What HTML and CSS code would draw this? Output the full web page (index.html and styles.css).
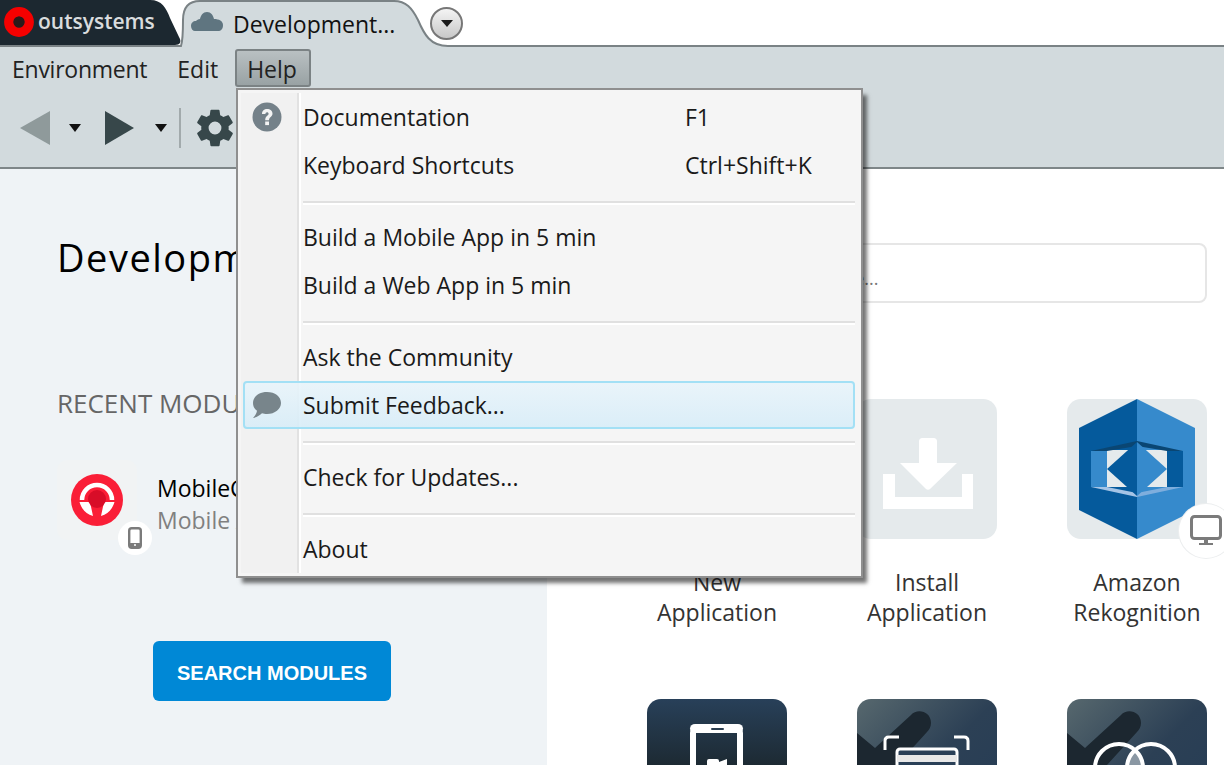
FILE: index.html
```html
<!DOCTYPE html>
<html lang="en">
<head>
    <meta charset="UTF-8">
    <meta name="viewport" content="width=device-width, initial-scale=1.0">
    <title>Service Studio</title>
    <link rel="stylesheet" href="styles.css">
</head>
<body>
    <!-- Tab strip -->
    <div class="tabstrip">
        <div class="logo-tab">
            <svg class="tab-shape" width="184" height="47" viewBox="0 0 184 47">
                <path d="M0 0H150C162 0 166 8 170 18L179 37C182 42 180 45 175 45H0Z" fill="#1c2830"/>
            </svg>
            <svg class="logo-mark" width="32" height="32" viewBox="0 0 32 32">
                <circle cx="16" cy="16" r="10.200" fill="none" stroke="#f50000" stroke-width="9.400"/>
                <circle cx="16" cy="16" r="5.500" fill="#2a1a1a"/>
            </svg>
            <span class="logo-text">outsystems</span>
        </div>
        <div class="env-tab">
            <svg class="tab-shape" width="272" height="47" viewBox="0 0 272 47">
                <path d="M1 46C3 40 3 32 3 20C3 8 8 1 20 1H214C226 1 232 8 238 20C244 34 250 46 268 46V48H0Z" fill="#d2dadd" stroke="#7a8285" stroke-width="2"/>
            </svg>
            <svg class="cloud" width="32" height="19" viewBox="0 0 32 19">
                <path d="M4 19C2 19 0 17 0 14C0 11 2 9 5 9C6 8 7 7 9 7C10 3 12 0 16 0C20 0 22 3 23 7C28 7 32 9 32 13C32 17 30 19 27 19Z" fill="#5f7580"/>
            </svg>
            <span class="tab-title">Development...</span>
        </div>
        <button class="tab-menu"><span class="tab-menu-arrow"></span></button>
    </div>

    <!-- Menu bar and toolbar -->
    <div class="chrome">
        <div class="menubar">
            <span class="menu-title menu-env">Environment</span>
            <span class="menu-title menu-edit">Edit</span>
            <span class="menu-title menu-open">Help</span>
        </div>
        <div class="toolbar">
            <span class="nav-back"></span>
            <span class="small-arrow arrow-back"></span>
            <span class="nav-forward"></span>
            <span class="small-arrow arrow-forward"></span>
            <span class="tool-sep"></span>
            <svg class="gear" width="44" height="44" viewBox="0 0 24 24">
                <path fill="#37474a" d="M19.4 13c.04-.33.06-.66.06-1s-.02-.67-.06-1l2.1-1.65c.2-.15.25-.42.13-.64l-2-3.46c-.12-.22-.38-.3-.6-.22l-2.5 1c-.52-.4-1.08-.73-1.7-.98l-.37-2.65A.49.49 0 0 0 14 2h-4c-.25 0-.46.18-.5.42l-.37 2.65c-.62.25-1.18.58-1.7.98l-2.5-1c-.22-.08-.48 0-.6.22l-2 3.46c-.13.22-.07.49.13.64L4.56 11c-.04.33-.06.67-.06 1s.02.67.06 1l-2.1 1.65c-.2.15-.25.42-.13.64l2 3.46c.12.22.38.3.6.22l2.5-1c.52.4 1.08.73 1.7.98l.37 2.65c.04.24.25.42.5.42h4c.25 0 .46-.18.5-.42l.37-2.65c.62-.25 1.18-.58 1.7-.98l2.5 1c.22.08.48 0 .6-.22l2-3.46c.12-.22.07-.49-.13-.64L19.4 13zM12 15.500a3.500 3.500 0 1 1 0-7 3.500 3.500 0 0 1 0 7z"/>
            </svg>
        </div>
    </div>

    <div class="main">
        <!-- Left panel -->
        <div class="left-panel">
            <h1 class="env-name">Development</h1>
            <h2 class="recent-title">RECENT MODULES</h2>
            <div class="module">
                <div class="module-icon">
                    <svg width="54" height="54" viewBox="0 0 54 54">
                        <circle cx="27" cy="27" r="26" fill="#fa1e37"/>
                        <path d="M12 27a15 15 0 0 1 30 0" fill="none" stroke="#fff" stroke-width="4.500"/>
                        <path d="M9.500 29L20 29L23 43C16 41 11.500 36 9.500 29ZM44.500 29L34 29L31 43C38 41 42.500 36 44.500 29Z" fill="#fff"/>
                        <circle cx="27" cy="26" r="9" fill="#d80d28"/>
                    </svg>
                    <span class="badge">
                        <svg width="14" height="22" viewBox="0 0 14 22">
                            <rect x="1.200" y="1.200" width="11.600" height="19.600" rx="2.500" fill="none" stroke="#7b7b7b" stroke-width="2.400"/>
                            <rect x="1" y="16" width="12" height="5" rx="1.500" fill="#7b7b7b"/>
                            <circle cx="7" cy="18" r="1" fill="#fff"/>
                        </svg>
                    </span>
                </div>
                <div class="module-text">
                    <div class="module-name">MobileCar</div>
                    <div class="module-type">Mobile App</div>
                </div>
            </div>
            <button class="search-btn">SEARCH MODULES</button>
        </div>

        <!-- Right panel -->
        <div class="right-panel">
            <div class="search-box">Search in Forge...</div>
            <div class="app-grid">
                <div class="app">
                    <div class="tile tile-light"></div>
                    <div class="app-name">New<br>Application</div>
                </div>
                <div class="app">
                    <div class="tile tile-light">
                        <svg width="140" height="140" viewBox="0 0 140 140">
                            <path d="M62 42C62 40 64 39 65 39H77C78 39 80 40 80 42V64H100L73 90C72 91 70 91 69 90L43 64H62Z" fill="#fff"/>
                            <path d="M26 75H38V98H105V75H116V110H26Z" fill="#fff"/>
                        </svg>
                    </div>
                    <div class="app-name">Install<br>Application</div>
                </div>
                <div class="app">
                    <div class="tile tile-light">
                        <svg width="140" height="140" viewBox="0 0 140 140">
                            <path d="M70 0L12 29V111L70 140Z" fill="#055a9c"/>
                            <path d="M70 0L128 29V111L70 140Z" fill="#368acc"/>
                            <path d="M40 51H100V88H40Z" fill="#e5eaec"/>
                            <path d="M24 52H40V88H24Z" fill="#368acc"/>
                            <path d="M100 52H116V88H100Z" fill="#055a9c"/>
                            <path d="M24 52L70 42V47L40 52Z" fill="#0a4673"/>
                            <path d="M116 52L70 42V47L100 52Z" fill="#0a4673"/>
                            <path d="M24 88L70 98V94L40 88Z" fill="#a5c4e6"/>
                            <path d="M116 88L70 98V94L100 88Z" fill="#7faedd"/>
                            <path d="M40 70L70 43V97Z" fill="#055a9c"/>
                            <path d="M100 70L70 43V97Z" fill="#368acc"/>
                        </svg>
                        <span class="badge badge-large">
                            <svg width="34" height="34" viewBox="0 0 34 34">
                                <rect x="2.500" y="2.500" width="29" height="22" rx="3" fill="none" stroke="#7b7b7b" stroke-width="3"/>
                                <path d="M15 25H19V29H24V31H10V29H15Z" fill="#7b7b7b"/>
                            </svg>
                        </span>
                    </div>
                    <div class="app-name">Amazon<br>Rekognition</div>
                </div>
                <div class="app">
                    <div class="tile tile-dark">
                        <svg width="140" height="66" viewBox="0 0 140 66">
                            <rect x="46" y="28" width="47" height="60" rx="6" fill="none" stroke="#fff" stroke-width="6"/>
                            <rect x="43" y="25" width="53" height="9" rx="5" fill="#fff"/>
                            <rect x="64" y="29" width="13" height="2" rx="1" fill="#2b3e50"/>
                            <path d="M60 62Q60 60 62 60H70Q72 60 72 62V63L80 60V66H60Z" fill="#fff"/>
                        </svg>
                    </div>
                </div>
                <div class="app">
                    <div class="tile tile-check">
                        <svg width="140" height="66" viewBox="0 0 140 66">
                            <path d="M0 34L18 49L54 16C60 9 74 12 74 24C74 28 72 31 70 33L40 66H0Z" fill="#1c2730"/>
                            <path d="M28 51V42Q28 38 32 38H42M111 51V42Q111 38 107 38H97" fill="none" stroke="#fff" stroke-width="3"/>
                            <rect x="40" y="50" width="60" height="30" rx="3" fill="#2a4057" stroke="#fff" stroke-width="3"/>
                            <rect x="40" y="56" width="60" height="7" fill="#e8e8e8"/>
                        </svg>
                    </div>
                </div>
                <div class="app">
                    <div class="tile tile-check">
                        <svg width="140" height="66" viewBox="0 0 140 66">
                            <path d="M0 34L18 49L54 16C60 9 74 12 74 24C74 28 72 31 70 33L40 66H0Z" fill="#1c2730"/>
                            <path d="M68 51A24 24 0 0 1 76 69H60A24 24 0 0 1 68 51Z" fill="#8a97a3"/>
                            <circle cx="52" cy="69" r="24" fill="none" stroke="#fff" stroke-width="4"/>
                            <circle cx="84" cy="69" r="24" fill="none" stroke="#fff" stroke-width="4"/>
                        </svg>
                    </div>
                </div>
            </div>
        </div>
    </div>

    <!-- Open Help menu -->
    <div class="help-menu">
        <div class="menu-row">
            <span class="menu-icon">
                <svg width="30" height="30" viewBox="0 0 30 30">
                    <circle cx="15" cy="15" r="14.500" fill="#748189"/>
                    <path d="M10 12C10 8.500 12.300 7 15 7C18.300 7 20.500 9 20.500 11.600C20.500 15 17 15.200 17 18.300H13.200C13.200 13.800 16.600 13.800 16.600 11.800C16.600 10.900 16 10.300 15 10.300C14 10.300 13.500 11 13.400 12Z" fill="#f4f4f4"/>
                    <rect x="13.200" y="19.500" width="3.800" height="3.600" fill="#f4f4f4"/>
                </svg>
            </span>
            <span class="menu-label">Documentation</span>
            <span class="menu-key">F1</span>
        </div>
        <div class="menu-row">
            <span class="menu-icon"></span>
            <span class="menu-label">Keyboard Shortcuts</span>
            <span class="menu-key">Ctrl+Shift+K</span>
        </div>
        <div class="menu-sep"></div>
        <div class="menu-row">
            <span class="menu-icon"></span>
            <span class="menu-label">Build a Mobile App in 5 min</span>
        </div>
        <div class="menu-row">
            <span class="menu-icon"></span>
            <span class="menu-label">Build a Web App in 5 min</span>
        </div>
        <div class="menu-sep"></div>
        <div class="menu-row">
            <span class="menu-icon"></span>
            <span class="menu-label">Ask the Community</span>
        </div>
        <div class="menu-row menu-row-active">
            <span class="menu-icon">
                <svg width="30" height="28" viewBox="0 0 30 28">
                    <path d="M15 1C23 1 29 5.500 29 12C29 18 23 23 15 23C13 23 11.500 22.700 10 22.300C8 24 5 26.500 1 27C3 25 4.500 22.500 5 19.800C2.500 18 1 15.300 1 12C1 5.500 7 1 15 1Z" fill="#78858b"/>
                </svg>
            </span>
            <span class="menu-label">Submit Feedback...</span>
        </div>
        <div class="menu-sep"></div>
        <div class="menu-row">
            <span class="menu-icon"></span>
            <span class="menu-label">Check for Updates...</span>
        </div>
        <div class="menu-sep"></div>
        <div class="menu-row">
            <span class="menu-icon"></span>
            <span class="menu-label">About</span>
        </div>
    </div>
</body>
</html>
```

FILE: styles.css
```css
/* General */
html, body {
    margin: 0;
    padding: 0;
    height: 765px;
    overflow: hidden;
}

body {
    width: 1224px;
    font-family: "Open Sans", "Noto Sans", sans-serif;
    font-size: 23px;
    color: #1b1b1b;
    background-color: #fff;
    position: relative;
}

/* Tab strip */
.tabstrip {
    height: 47px;
    display: flex;
    box-shadow: inset 0 -2px 0 #7a8285;
}

.tab-shape {
    position: absolute;
    left: 0;
    top: 0;
}

.logo-tab {
    position: relative;
    width: 180px;
    height: 46px;
    display: flex;
    align-items: center;
    flex-shrink: 0;
}

.logo-mark {
    position: relative;
    margin-left: 3px;
    margin-top: -2px;
}

.logo-text {
    position: relative;
    margin-left: 3px;
    margin-top: -4px;
    font-size: 21px;
    font-weight: 600;
    letter-spacing: 0;
    color: #d9dcde;
}

.env-tab {
    position: relative;
    width: 248px;
    height: 46px;
    display: flex;
    align-items: center;
    flex-shrink: 0;
}

.cloud {
    position: relative;
    margin-left: 11px;
    margin-top: -3px;
}

.tab-title {
    position: relative;
    margin-left: 10px;
    margin-top: 1px;
    color: #111;
}

.tab-menu {
    width: 33px;
    height: 33px;
    margin: 7px 0 0 2px;
    padding: 0;
    border: 2px solid #777;
    border-radius: 50%;
    background: linear-gradient(#f4f4f4, #c8c8c8);
    display: flex;
    align-items: center;
    justify-content: center;
}

.tab-menu-arrow {
    width: 0;
    height: 0;
    border-left: 6px solid transparent;
    border-right: 6px solid transparent;
    border-top: 7px solid #1a1a1a;
}

/* Menu bar and toolbar */
.chrome {
    height: 120px;
    background-color: #d2dadd;
    border-bottom: 2px solid #7e8688;
}

.menubar {
    height: 39px;
    padding-top: 2px;
    display: flex;
    align-items: flex-start;
}

.menu-title {
    line-height: 40px;
    color: #222;
}

.menu-env {
    margin-left: 12px;
    letter-spacing: -0.25px;
}

.menu-edit {
    margin-left: 30px;
}

.menu-open {
    margin-left: 17px;
    padding: 0 12px 0 10px;
    height: 34px;
    line-height: 36px;
    border: 2px solid #7b8284;
    border-radius: 3px;
    background: linear-gradient(#b9c0c2, #99a2a4);
}

.toolbar {
    height: 78px;
    padding: 1px 0 0 20px;
    display: flex;
    align-items: center;
}

.nav-back {
    width: 0;
    height: 0;
    border-top: 17px solid transparent;
    border-bottom: 17px solid transparent;
    border-right: 30px solid #8f9a9b;
}

.nav-forward {
    width: 0;
    height: 0;
    margin-left: 24px;
    border-top: 17px solid transparent;
    border-bottom: 17px solid transparent;
    border-left: 29px solid #37474a;
}

.small-arrow {
    width: 0;
    height: 0;
    margin-left: 19px;
    border-left: 6px solid transparent;
    border-right: 6px solid transparent;
    border-top: 8px solid #111;
}

.arrow-forward {
    margin-left: 21px;
}

.tool-sep {
    width: 2px;
    height: 40px;
    margin-left: 12px;
    background-color: #a2aaac;
}

.gear {
    margin-left: 12px;
}

/* Main area */
.main {
    display: flex;
    height: 596px;
    overflow: hidden;
}

.left-panel {
    width: 547px;
    flex-shrink: 0;
    box-sizing: border-box;
    padding: 64px 0 0 57px;
    background-color: #eff3f6;
}

.env-name {
    margin: 0;
    font-size: 38px;
    line-height: 48px;
    font-weight: 400;
    letter-spacing: 1.5px;
    color: #000;
}

.recent-title {
    margin: 104px 0 0;
    font-size: 26px;
    line-height: 36px;
    font-weight: 400;
    color: #666;
}

.module {
    margin: 39px 0 0;
    display: flex;
}

.module-icon {
    position: relative;
    width: 80px;
    height: 80px;
    border-radius: 10px;
    background-color: #f1f3f4;
    display: flex;
    align-items: center;
    justify-content: center;
}

.badge {
    position: absolute;
    right: -15px;
    bottom: -15px;
    width: 34px;
    height: 34px;
    border-radius: 50%;
    background-color: #fff;
    display: flex;
    align-items: center;
    justify-content: center;
}

.badge-large {
    right: -26px;
    bottom: -19px;
    width: 54px;
    height: 54px;
    box-shadow: 0 0 0 1px #eceeef;
}

.module-text {
    margin-left: 20px;
    white-space: nowrap;
}

.module-name {
    font-size: 23px;
    line-height: 33px;
    margin-top: 12px;
    color: #000;
}

.module-type {
    font-size: 23px;
    line-height: 31px;
    color: #808080;
}

.search-btn {
    display: block;
    width: 238px;
    height: 60px;
    margin: 101px 0 0 96px;
    padding-top: 6px;
    border: none;
    border-radius: 6px;
    background-color: #0088d6;
    color: white;
    font-family: "Liberation Sans", Arial, sans-serif;
    font-size: 20px;
    font-weight: bold;
}

.right-panel {
    flex: 1;
    padding-top: 74px;
    background-color: #fff;
}

.search-box {
    box-sizing: border-box;
    width: 580px;
    height: 60px;
    margin-left: 80px;
    padding-left: 106px;
    line-height: 66px;
    border: 2px solid #e6e6e6;
    border-radius: 8px;
    font-size: 18px;
    color: #777;
}

.app-grid {
    display: grid;
    grid-template-columns: repeat(3, 210px);
    grid-auto-rows: 300px;
    margin: 96px 0 0 65px;
}

.app {
    text-align: center;
}

.tile {
    position: relative;
    width: 140px;
    height: 140px;
    margin: 0 auto;
    border-radius: 14px;
}

.tile svg {
    display: block;
}

.tile-light {
    background-color: #e5eaec;
}

.tile-dark {
    background: linear-gradient(#284059, #1d2a33 66px);
}

.tile-check {
    background: linear-gradient(135deg, #57686e, #2c4055 50%, #253c55);
}

.tile-dark, .tile-check {
    overflow: hidden;
}

.app-name {
    margin-top: 28px;
    line-height: 30px;
    color: #333;
}

/* Help menu */
.help-menu {
    position: absolute;
    left: 236px;
    top: 88px;
    width: 612px;
    padding: 3px 6px 3px 5px;
    border: 2px solid #8f8f8f;
    background-color: #f5f5f5;
    background-image:
        linear-gradient(#f1f1f1, #f1f1f1),
        linear-gradient(#e2e2e2, #e2e2e2),
        linear-gradient(#fff, #fff);
    background-size: 56px 480px, 2px 480px, 2px 480px;
    background-position: 3px 3px, 59px 3px, 61px 3px;
    background-repeat: no-repeat;
    box-shadow: 5px 6px 4px -1px rgba(0, 0, 0, 0.55);
    color: #1a1a1a;
}

.menu-row {
    height: 48px;
    display: flex;
    align-items: center;
    box-sizing: border-box;
}

.menu-row-active {
    border: 2px solid #a3e0f5;
    border-radius: 4px;
    background: linear-gradient(rgba(232, 244, 250, 0.9), rgba(216, 237, 248, 0.9));
}

.menu-icon {
    width: 60px;
    padding-left: 9px;
    box-sizing: border-box;
    display: flex;
    flex-shrink: 0;
}

.menu-row-active .menu-icon {
    margin-left: -2px;
}

.menu-label {
    width: 382px;
    white-space: nowrap;
}

.menu-key {
    white-space: nowrap;
}

.menu-sep {
    height: 24px;
    box-sizing: border-box;
    padding: 12px 0 0 60px;
}

.menu-sep::before {
    content: "";
    display: block;
    height: 2px;
    background-color: #e0e0e0;
    border-bottom: 2px solid #fff;
}
```
